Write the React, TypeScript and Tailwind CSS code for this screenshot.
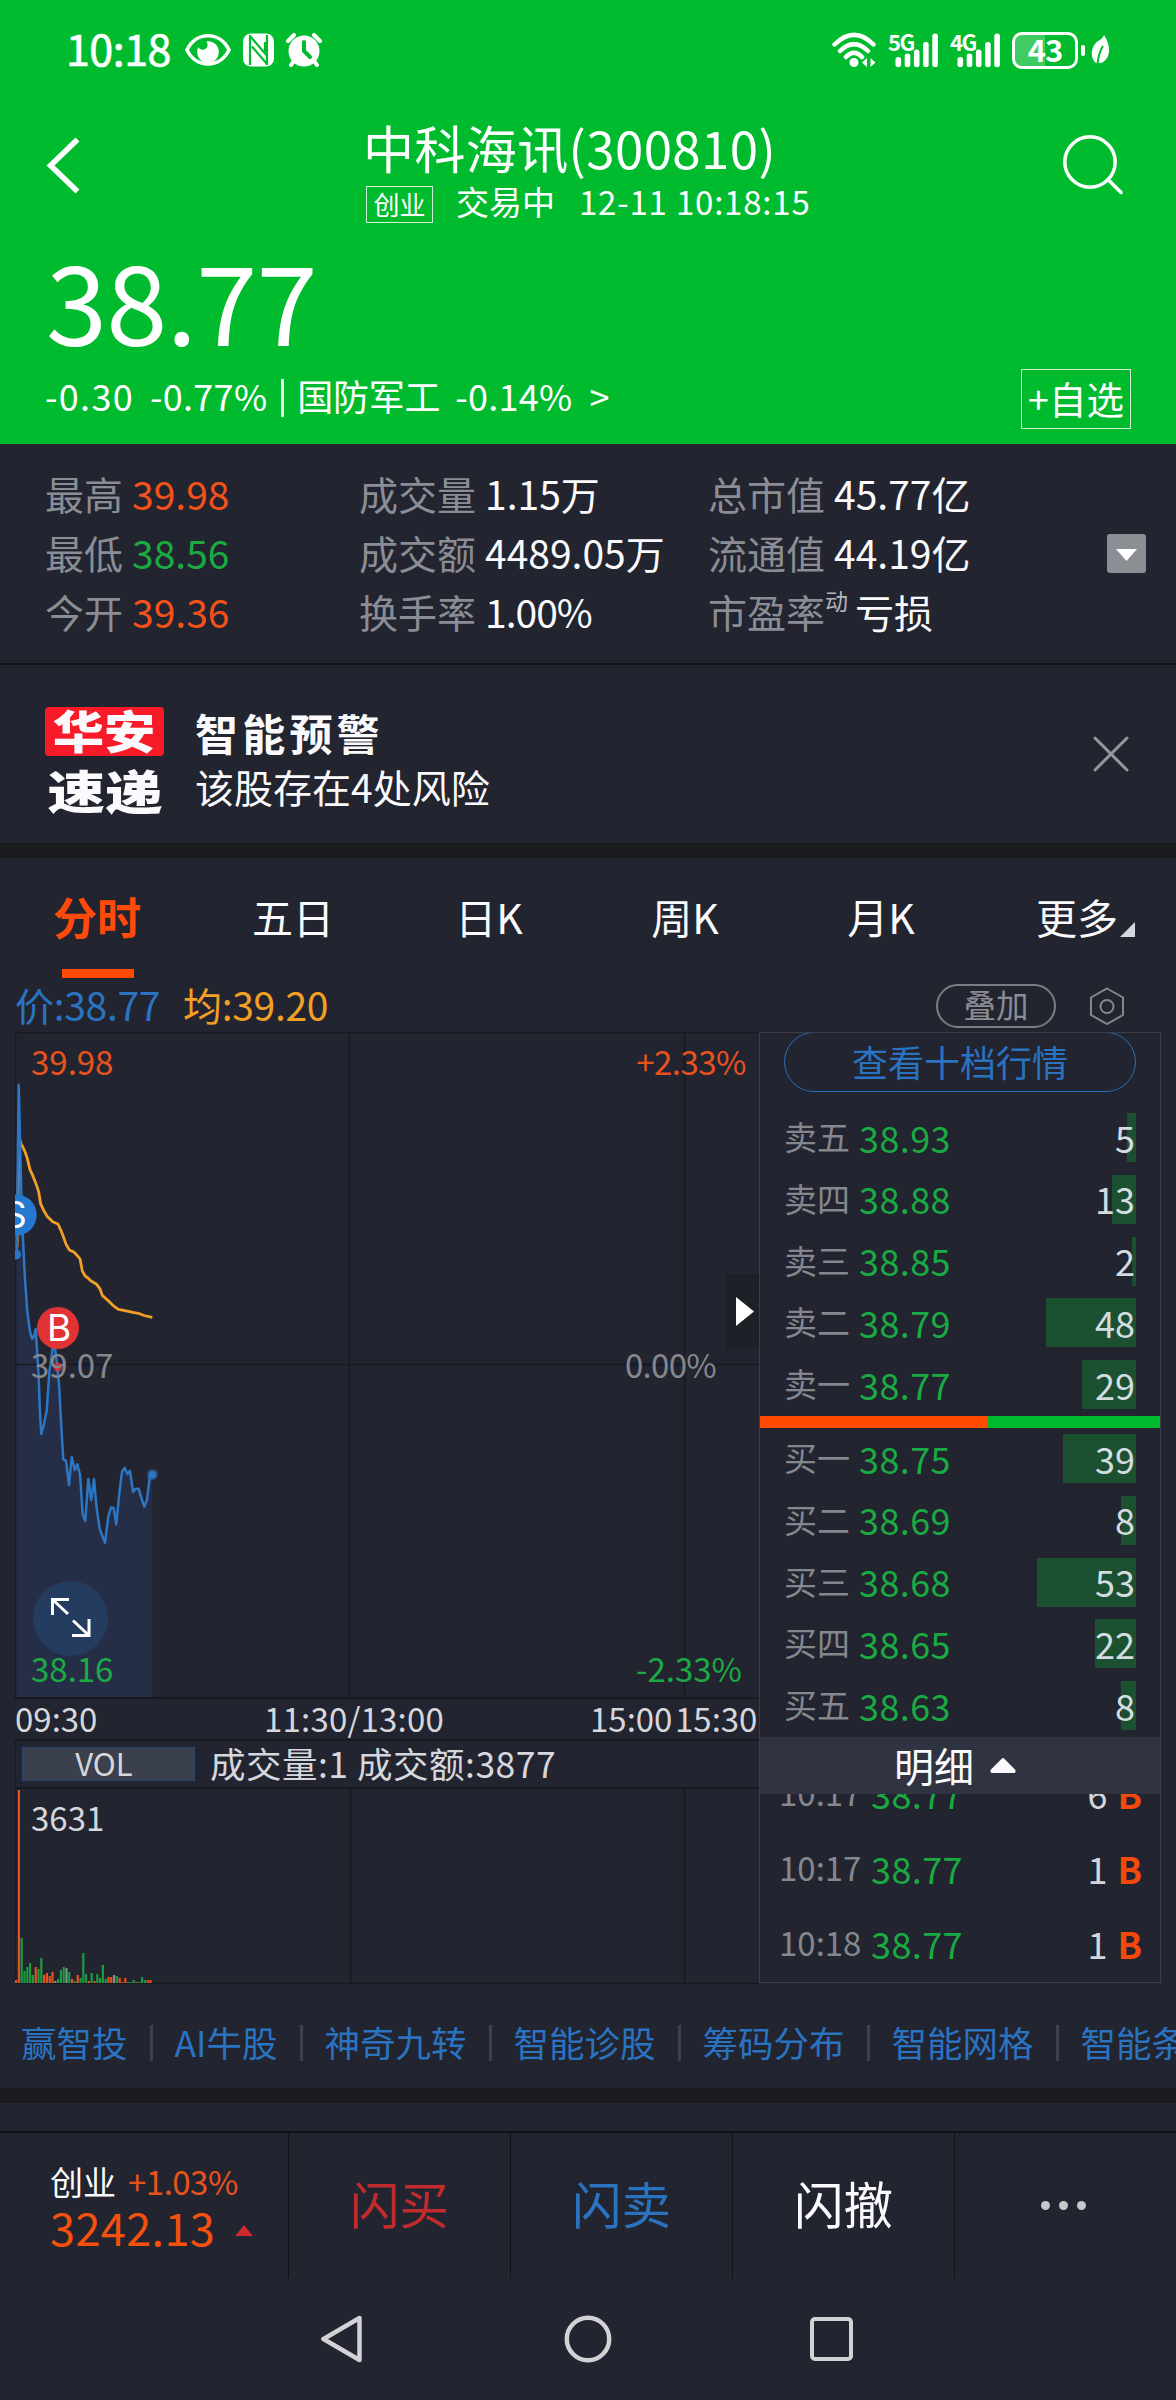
import { ReactNode } from "react";

interface Level {
    label: string
    price: string
    volume: number
}

interface Stat {
    label: string
    value: string
    color?: string
    sup?: string
}

const stats: Stat[][] = [
    [
        { label: "最高", value: "39.98", color: "text-[#f4511a]" },
        { label: "最低", value: "38.56", color: "text-[#1aaa42]" },
        { label: "今开", value: "39.36", color: "text-[#f4511a]" },
    ],
    [
        { label: "成交量", value: "1.15万" },
        { label: "成交额", value: "4489.05万" },
        { label: "换手率", value: "1.00%", color: "text-[#fafafc] tracking-[-1px]" },
    ],
    [
        { label: "总市值", value: "45.77亿" },
        { label: "流通值", value: "44.19亿" },
        { label: "市盈率", value: "亏损", sup: "动" },
    ],
];

const sells: Level[] = [
    { label: "卖五", price: "38.93", volume: 5 },
    { label: "卖四", price: "38.88", volume: 13 },
    { label: "卖三", price: "38.85", volume: 2 },
    { label: "卖二", price: "38.79", volume: 48 },
    { label: "卖一", price: "38.77", volume: 29 },
];

const buys: Level[] = [
    { label: "买一", price: "38.75", volume: 39 },
    { label: "买二", price: "38.69", volume: 8 },
    { label: "买三", price: "38.68", volume: 53 },
    { label: "买四", price: "38.65", volume: 22 },
    { label: "买五", price: "38.63", volume: 8 },
];

const trades = [
    { time: "10:17", volume: 6 },
    { time: "10:17", volume: 1 },
    { time: "10:18", volume: 1 },
];

const links = ["赢智投", "AI牛股", "神奇九转", "智能诊股", "筹码分布", "智能网格", "智能条件"];

const pricePoints =
    "1.7,220 3.7,52.7 6.3,160 7.7,202 10,247 12.3,280 15,299.6 17.3,306.8 18.7,305 20.7,297 22,318 23.7,345 25,381 26.3,401.8 29,392 31.7,378.6 34.3,340.7 37.7,316 40,316 41.7,329.5 44,351.8 46,389.8 48.3,427.3 51,428.6 54,453.2 56.7,425.1 59.7,438 62.3,432.2 65,442.5 67.7,482.6 70.3,488.9 73.3,446.9 76.3,467.9 79,446.9 81.7,476.8 84.7,496.9 90,510.8 93.3,484.4 96,475.5 98.7,475.9 101.3,492.5 104.3,461.2 107,439.8 109.7,435.8 112.3,442 115,438.9 118,459.9 120.7,456.8 123.7,456.8 126.3,465.7 129.3,474.6 132,467.9 135,442.5 137.3,442.5";

const averagePoints =
    "2,215 4,106 6.3,112 10,119.7 12.3,126.4 15,137.6 17.7,143.4 20.7,150.9 23.7,159.9 25.7,171.9 29,179.1 32.3,184.4 37.7,189.8 43,192 45.7,197.8 48.3,204.5 51,212.1 54.3,217.9 59,220.1 62.3,223.7 65,226.8 67.3,238.9 70,243.8 73,246 75.7,248.7 81.7,252.3 85,256.8 87.3,263.4 93.3,268.8 98.3,273.7 103.3,277.3 110,278.6 117.7,280.4 123.3,281.3 129,283.5 137.3,285.3";

// r = up, g = down, n = flat
const volumes =
    "r3 r193 g45 g12 g16 g20 g8 r16 g14 g25 r8 r10 r7 r11 n2 g4 g13 g16 n15 g11 r4 g2 r8 g5 g30 g9 r2 g10 r2 g9 g5 g18 g4 r6 r6 n8 g7 r5 r1 r5 g1 g1 g3 r1 g1 g6 g3 r3 r3".split(" ");

const volumeColors: Record<string, string> = { r: "#e2531f", g: "#1c9a3f", n: "#8b8e93" };

function Signal({ label }: { label: string }) {
    const tops = [24, 20.5, 16.5, 9, 0.5];
    return (
        <div className="relative h-[34px] w-[50px]">
            <span className="absolute left-0 -top-[3px] text-[22px] font-bold tracking-[-1.500px]">{label}</span>
            <svg width="50" height="34" viewBox="0 0 50 34" fill="#fff">
                {tops.map((top, i) => (
                    <rect key={i} x={7.5 + i * 9.2} y={top} width="5.6" height={34 - top} rx="2.6" />
                ))}
            </svg>
        </div>
    )
}

function StatusBar() {
    return (
        <div className="flex h-[100px] items-center pl-[66px]">
            <span className="mb-[6px] w-[110px] text-[43px] tracking-[-0.5px] [-webkit-text-stroke:0.7px_#fff]">10:18</span>
            <svg className="ml-[8px]" width="48" height="34" viewBox="0 0 48 34">
                <path d="M3 17C12 -2 36 -2 45 17C36 35.500 12 35.500 3 17Z" fill="none" stroke="#fff" strokeWidth="3.600" />
                <circle cx="24" cy="19" r="10.800" fill="#fff" />
                <path d="M12 12L22 7Q26 15 20 16.500Q16 17.500 14 14Z" fill="#00bb2e" />
            </svg>
            <svg className="ml-[11px]" width="31" height="34" viewBox="0 0 31 34">
                <rect x="0" y="0.500" width="31" height="33" rx="8" fill="#fff" />
                <path d="M7 2V32M24 2V32M7 3L22 20.500V9M9 13.500L24 31" fill="none" stroke="#00bb2e" strokeWidth="2.200" />
            </svg>
            <svg className="ml-[12px]" width="36" height="34" viewBox="0 0 36 34">
                <circle cx="18" cy="18" r="15.500" fill="#fff" />
                <path d="M2 8L8 2M34 8L28 2M8 28L5 32M28 28L31 32" stroke="#fff" strokeWidth="4" strokeLinecap="round" />
                <path d="M18 9V18L24 24" fill="none" stroke="#00bb2e" strokeWidth="4" strokeLinecap="round" />
            </svg>
            <svg className="ml-[510px]" width="45" height="36" viewBox="0 0 45 36" fill="none" stroke="#fff" strokeWidth="4.500" strokeLinecap="round">
                <path d="M2.500 12.500Q22 -7 41.500 12.500M8 19Q22 5 36 19M14 25Q22 16.500 30 25" />
                <circle cx="22" cy="30.500" r="4.500" fill="#fff" stroke="none" />
                <path d="M35 26V35L30 30.500ZM38.500 26V35L43.500 30.500Z" fill="#fff" stroke="none" />
            </svg>
            <div className="ml-[11px] flex gap-[12px]">
                <Signal label="5G" />
                <Signal label="4G" />
            </div>
            <div className="relative ml-[12px] flex h-[37px] w-[66px] items-center justify-center rounded-[10px] border-[3px] border-white">
                <div className="absolute left-0 top-0 h-full w-[30px] rounded-l-[7px] bg-white/25" />
                <span className="relative mb-[4px] text-[31px] font-bold tracking-[-1px]">43</span>
            </div>
            <div className="ml-[3px] h-[11px] w-[4px] rounded-full bg-white" />
            <svg className="ml-[6px]" width="19" height="30" viewBox="0 0 19 30">
                <path d="M13 0C18 8 20 16 16 23C13 28 8 29 5 28C-1 23 0 14 4 9C7 5 11 5 13 0Z" fill="#fff" />
                <path d="M12 11C8 17 7 22 6.500 30" fill="none" stroke="#00bb2e" strokeWidth="2" />
            </svg>
        </div>
    )
}

function Header() {
    return (
        <header className="h-[444px] bg-[#00bb2e] text-white">
            <StatusBar />
            <div className="flex h-[136px] items-start">
                <svg className="ml-[46px] mt-[37px]" width="34" height="57" viewBox="0 0 34 57">
                    <path d="M31.500 2.500L4.500 28.500L31.500 54.500" fill="none" stroke="#fff" strokeWidth="5.500" />
                </svg>
                <div className="ml-[283px] mt-[22px] w-[500px]">
                    <h1 className="text-[51px] leading-none tracking-[0.4px]">中科海讯(300810)</h1>
                    <div className="mt-[13px] flex h-[37px] items-center whitespace-pre text-[33px]">
                        <span className="flex h-[37px] w-[67px] items-center justify-center border border-white/80 pb-[2px] text-[26px] ml-[3px]">创业</span>
                        <span className="mb-[7px] ml-[23px]">交易中</span>
                        <span className="mb-[6px] ml-[24px] tracking-[0.8px]">12-11 10:18:15</span>
                    </div>
                </div>
                <svg className="ml-[200px] mt-[34px]" width="62" height="62" viewBox="0 0 62 62" fill="none" stroke="#fff" strokeWidth="3.500" strokeLinecap="round">
                    <circle cx="27" cy="28" r="25.200" />
                    <path d="M45.500 46L58 58.500" />
                </svg>
            </div>
            <div className="ml-[46px] mt-[7px] text-[110px] tracking-[-0.8px]">38.77</div>
            <div className="mt-[16px] flex h-[60px] items-center text-[36px]">
                <div className="flex w-[975px] items-center pb-[8px] pl-[45px]">
                    <span className="tracking-[1.300px]">-0.30</span>
                    <span className="ml-[16px] tracking-[0.3px]">-0.77%</span>
                    <span className="ml-[14px] mt-[5px] h-[38px] w-[3px] bg-white/90" />
                    <span className="ml-[13px] tracking-[-0.3px]">国防军工</span>
                    <span className="ml-[15px] tracking-[0.3px]">-0.14%</span>
                    <span className="ml-[17px]">&gt;</span>
                </div>
                <span className="ml-[46px] flex h-[60px] w-[110px] items-center justify-center border border-white/80 pb-[2px] text-[37.500px]">+自选</span>
            </div>
        </header>
    )
}

function Stats() {
    return (
        <section className="flex h-[221px] border-b-2 border-[#11131c] pl-[45px] pt-[19.500px] text-[39px]">
            {stats.map((column, i) => (
                <div key={i} className={i == 0 ? "w-[314px]" : i == 1 ? "w-[349px]" : "w-[399px]"}>
                    {column.map(item => (
                        <div key={item.label} className="flex h-[59px] items-center">
                            <span className="text-[#8b8d95]">{item.label}</span>
                            {item.sup && <span className="-mr-[2px] mb-[21px] text-[23px] text-[#b4b6bb]">{item.sup}</span>}
                            <span className={`ml-[9px] ${item.color ?? "text-[#fafafc]"}`}>{item.value}</span>
                        </div>
                    ))}
                </div>
            ))}
            <svg className="mt-[70px]" width="39" height="39" viewBox="0 0 39 39">
                <rect width="39" height="39" rx="3" fill="#8b8f94" />
                <path d="M9 15H30L19.500 27Z" fill="#fff" />
            </svg>
        </section>
    )
}

function Alert() {
    return (
        <section className="flex h-[193px] border-b-[15px] border-[#1a1b1f] pl-[45px] pt-[42px] text-[#fafafc]">
            <div className="w-[119px] font-black">
                <div className="flex h-[49px] items-center justify-center rounded-[4px] bg-[#f81a28] pb-[4px] text-[45px]">
                    <span className="scale-x-[1.140]">华安</span>
                </div>
                <div className="mt-[8px] flex h-[50px] items-center justify-center text-[46px]">
                    <span className="scale-x-[1.250]">速递</span>
                </div>
            </div>
            <div className="ml-[31px] w-[898px]">
                <div className="mt-[4px] text-[43px] font-bold tracking-[4.200px]">智能预警</div>
                <div className="mt-[13px] text-[39px]">该股存在4处风险</div>
            </div>
            <svg className="mt-[29px]" width="36" height="36" viewBox="0 0 36 36">
                <path d="M2 2L34 34M34 2L2 34" stroke="#94979b" strokeWidth="3" strokeLinecap="round" />
            </svg>
        </section>
    )
}

function Tabs() {
    return (
        <nav className="grid h-[120px] grid-cols-6 text-[41px] text-[#fafafc]">
            {["分时", "五日", "日K", "周K", "月K", "更多"].map((tab, i) => (
                <div key={tab} className="relative flex justify-center pr-[2px] pt-[38px]">
                    <span className={i == 0 ? "-mt-[2px] text-[44px] font-bold text-[#ff4a0a]" : ""}>{tab}</span>
                    {i == 0 && <i className="absolute bottom-0 left-[62px] h-[9px] w-[72px] bg-[#ff4a00]" />}
                    {i == 5 && (
                        <svg className="absolute right-[41px] top-[64px]" width="15" height="15" viewBox="0 0 15 15">
                            <path d="M15 0V15H0Z" fill="#d5d7dc" />
                        </svg>
                    )}
                </div>
            ))}
        </nav>
    )
}

function Summary() {
    return (
        <div className="flex h-[54px] items-center pl-[15px] text-[39px]">
            <span className="mb-[2px] w-[168px] tracking-[-0.3px] text-[#2a73c0]">价:38.77</span>
            <span className="mb-[2px] w-[753px] tracking-[-0.3px] text-[#f2a025]">均:39.20</span>
            <span className="mt-[2px] flex h-[44px] w-[120px] items-center justify-center rounded-full border-2 border-[#7b7d83] pb-[3px] text-[32.500px] text-[#8b8d93]">叠加</span>
            <svg className="ml-[33px] mt-[2px]" width="36" height="38" viewBox="0 0 36 38" fill="none" stroke="#85878c" strokeWidth="2">
                <path d="M18 1.500L34 10.500V28L18 37L2 28V10.500Z" />
                <circle cx="18" cy="19.500" r="6.500" />
            </svg>
        </div>
    )
}

function ChartLabel({ className, children }: { className: string, children: ReactNode }) {
    return <span className={`absolute text-[33px] ${className}`}>{children}</span>
}

function PriceChart() {
    return (
        <div className="relative h-[667px]">
            <svg className="block" width="744" height="667" viewBox="0 0 744 667" fill="none">
                <polygon points={`1,220 ${pricePoints} 137.3,665 1,665`} fill="#262e47" />
                <path d="M0.500 0V667M0 0.500H744M334.500 0V667M669.500 0V667M0 332.500H744" stroke="#171922" strokeWidth="1.500" />
                <path d="M0 666H744" stroke="#171922" strokeWidth="2" />
                <polyline points={averagePoints} stroke="#f2a025" strokeWidth="2.800" strokeLinejoin="round" />
                <polyline points={pricePoints} stroke="#2d76c4" strokeWidth="2.500" strokeLinejoin="round" />
                <circle cx="137.500" cy="442.500" r="5.500" fill="#2d76c4" fillOpacity="0.500" />
                <circle cx="137.500" cy="442.500" r="3.500" fill="#2d76c4" />
                <circle cx="1" cy="222.500" r="5" fill="#2d76c4" />
                <circle cx="1" cy="183" r="20.700" fill="#2478cf" />
                <circle cx="43" cy="335" r="4.500" fill="#e13236" fillOpacity="0.800" />
                <circle cx="43" cy="296" r="21" fill="#e13236" />
                <circle cx="55.500" cy="586.500" r="37.500" fill="#233c60" />
                <path d="M37.500 583V567.500H54M37.500 567.500L53 582M74 587V603.500H57M74 603.500L58 588.500" stroke="#fff" strokeWidth="3" />
            </svg>
            <div className="absolute left-0 top-[160px] h-[46px] w-[30px] overflow-hidden">
                <span className="absolute -left-[12px] top-0 font-['Inter',sans-serif] text-[37px] leading-[46px] text-white">S</span>
            </div>
            <span className="absolute left-[32px] top-[273px] font-['Inter',sans-serif] text-[37px] leading-[46px] text-white">B</span>
            <ChartLabel className="left-[16px] top-[13px] text-[#e8531d]">39.98</ChartLabel>
            <ChartLabel className="right-[13px] top-[13px] tracking-[-0.500px] text-[#e8531d]">+2.33%</ChartLabel>
            <ChartLabel className="left-[16px] top-[316px] text-[#85878d]">39.07</ChartLabel>
            <ChartLabel className="right-[43px] top-[316px] tracking-[-0.700px] text-[#85878d]">0.00%</ChartLabel>
            <ChartLabel className="left-[16px] top-[620px] text-[#1cab42]">38.16</ChartLabel>
            <ChartLabel className="right-[17px] top-[620px] text-[#1cab42]">-2.33%</ChartLabel>
            {/* collapse handle */}
            <div className="absolute right-0 top-[242px] flex h-[75px] w-[33px] items-center bg-[#1e2028] pl-[10px]">
                <svg width="18" height="29" viewBox="0 0 18 29">
                    <path d="M0 0L18 14.500L0 29Z" fill="#fff" />
                </svg>
            </div>
        </div>
    )
}

function VolumeChart() {
    return (
        <div className="relative h-[195px]">
            <svg className="block" width="744" height="195" viewBox="0 0 744 195">
                <path d="M0.500 0V195M335.500 0V195M669.500 0V195M0 194.500H744" stroke="#171922" strokeWidth="1.500" />
                {volumes.map((item, i) => {
                    const height = Number(item.slice(1));
                    return <rect key={i} x={i * 2.8} y={194 - height} width="2.2" height={height} fill={volumeColors[item[0]]} />
                })}
            </svg>
            <ChartLabel className="left-[16px] top-[12px] text-[#d5d7dd]">3631</ChartLabel>
        </div>
    )
}

function Charts() {
    return (
        <div className="w-[744px]">
            <PriceChart />
            <div className="flex h-[42px] items-center border-b-2 border-[#171922] pb-[2px] text-[33px] text-[#d5d7dd]">
                <span className="w-[249px]">09:30</span>
                <span className="w-[326px] tracking-[0.2px]">11:30/13:00</span>
                <span className="w-[85px]">15:00</span>
                <span>15:30</span>
            </div>
            <div className="flex h-[48px] items-center border-b-2 border-l border-[#171922] pl-[6px] text-[#d5d7dd]">
                <span className="flex h-[34px] w-[173px] items-center justify-center border border-[#2c4372] bg-[#3a414c] pb-[3px] pr-[9px] text-[31px]">VOL</span>
                <span className="mb-[3px] ml-[15px] whitespace-pre text-[35.500px] tracking-[0.500px]">成交量:1 成交额:3877</span>
            </div>
            <VolumeChart />
        </div>
    )
}

function Levels({ levels }: { levels: Level[] }) {
    return (
        <div className="flex flex-col gap-[12.750px] pl-[24px] pr-[24px]">
            {levels.map(level => (
                <div key={level.label} className="relative flex h-[49px] items-center text-[36px]">
                    <i className="absolute right-0 top-0 h-full bg-[#1b5130]" style={{ width: level.volume * 1.87 }} />
                    <span className="mb-[2px] w-[75px] text-[33px] text-[#85878e]">{level.label}</span>
                    <span className="mb-[2px] grow tracking-[0.400px] text-[#1aaa42]">{level.price}</span>
                    <span className="relative mb-[2px] pr-px text-[#d4dce0]">{level.volume}</span>
                </div>
            ))}
        </div>
    )
}

function OrderBook() {
    return (
        <div className="h-[951px] w-[402px] overflow-hidden border border-[#3b3e49]">
            <div className="-mt-px ml-[24px] flex h-[60px] w-[352px] items-center justify-center rounded-full border border-[#2a6cb3] pb-[3px] text-[36px] text-[#2a73c0]">查看十档行情</div>
            <div className="mt-[21px]"><Levels levels={sells} /></div>
            <div className="mt-[7px] flex h-[12px]">
                <i className="w-[228px] bg-[#ff4a00]" />
                <i className="grow bg-[#00bb2e]" />
            </div>
            <div className="mt-[6px]"><Levels levels={buys} /></div>
            <div className="relative mt-[7px] flex h-[57px] items-center bg-[#303442] pl-[134px] text-[40px] text-[#fafafc]">
                <span className="mb-[2px]">明细</span>
                <svg className="ml-[16px]" width="26" height="15" viewBox="0 0 26 15">
                    <path d="M13 1.500L24 12.500V13.500H2V12.500Z" fill="#fafafc" stroke="#fafafc" strokeWidth="3" strokeLinejoin="round" />
                </svg>
            </div>
            <div className="h-[188px] overflow-hidden">
                <div className="-mt-[39px]">
                    {trades.map((trade, i) => (
                        <div key={i} className="flex h-[75px] items-center pl-[19px] pr-[18px] text-[36px]">
                            <span className="w-[92px] text-[33px] text-[#85878e]">{trade.time}</span>
                            <span className="tracking-[0.400px] text-[#1aaa42]">38.77</span>
                            <span className="grow pr-[10px] text-right text-[#d4d6dc]">{trade.volume}</span>
                            <span className="font-bold text-[#f4490c]">B</span>
                        </div>
                    ))}
                </div>
            </div>
        </div>
    )
}

function Links() {
    return (
        <div className="flex h-[120px] items-center overflow-hidden whitespace-nowrap border-b-[15px] border-[#1a1b1f] pl-[21px] text-[35.500px] text-[#2a73c0]">
            {links.map((link, i) => (
                <div key={link} className="flex shrink-0 items-center pt-[15px]">
                    {i > 0 && <i className="mx-[22px] h-[36px] w-[3px] bg-[#3d414e]" />}
                    <span className="mb-[2px]">{link}</span>
                </div>
            ))}
        </div>
    )
}

function Footer() {
    return (
        <footer className="mt-[28px] flex h-[147px] border-t-2 border-[#10121a] text-[49.500px]">
            <div className="w-[289px] border-r border-[#11131b] pl-[50px] pt-[32px]">
                <div className="flex text-[33px]">
                    <span className="text-[#fafafc]">创业</span>
                    <span className="ml-[12px] tracking-[-0.500px] text-[#e8531d]">+1.03%</span>
                </div>
                <div className="mt-[6px] flex items-center text-[45px] text-[#f4510f]">
                    <span className="tracking-[0.400px]">3242.13</span>
                    <svg className="ml-[20px] mt-[7px]" width="18" height="11" viewBox="0 0 18 11">
                        <path d="M9 0L18 11H0Z" fill="#cc2a2e" />
                    </svg>
                </div>
            </div>
            <div className="flex w-[222px] items-center justify-center border-r border-[#11131b] pb-[6px] text-[#c22b2e]">闪买</div>
            <div className="flex w-[222px] items-center justify-center border-r border-[#11131b] pb-[6px] text-[#2a73c0]">闪卖</div>
            <div className="flex w-[222px] items-center justify-center border-r border-[#11131b] pb-[6px] text-[#fafafc]">闪撤</div>
            <div className="flex w-[217px] items-center justify-center gap-[9px]">
                <i className="size-[9px] rounded-full bg-[#c8c8ca]" />
                <i className="size-[9px] rounded-full bg-[#c8c8ca]" />
                <i className="size-[9px] rounded-full bg-[#c8c8ca]" />
            </div>
        </footer>
    )
}

function NavBar() {
    return (
        <div className="flex h-[122px] items-center pl-[320px]">
            <svg width="44" height="48" viewBox="0 0 44 48" fill="none" stroke="#d2d2d4" strokeWidth="4.500" strokeLinejoin="round">
                <path d="M39.500 3V45L3.500 24Z" />
            </svg>
            <svg className="ml-[200px]" width="48" height="48" viewBox="0 0 48 48" fill="none" stroke="#d2d2d4" strokeWidth="4.500">
                <circle cx="24" cy="24" r="21.200" />
            </svg>
            <i className="ml-[198px] h-[44px] w-[43px] rounded-[5px] border-[4.500px] border-[#d2d2d4]" />
        </div>
    )
}

export default function App() {
    return (
        <div className="h-[2400px] w-[1176px] overflow-hidden bg-[#222430] font-['Noto_Sans_CJK_SC',sans-serif] leading-none">
            <Header />
            <Stats />
            <Alert />
            <Tabs />
            <Summary />
            <div className="flex h-[951px] pl-[15px]">
                <Charts />
                <OrderBook />
            </div>
            <Links />
            <Footer />
            <NavBar />
        </div>
    )
}
